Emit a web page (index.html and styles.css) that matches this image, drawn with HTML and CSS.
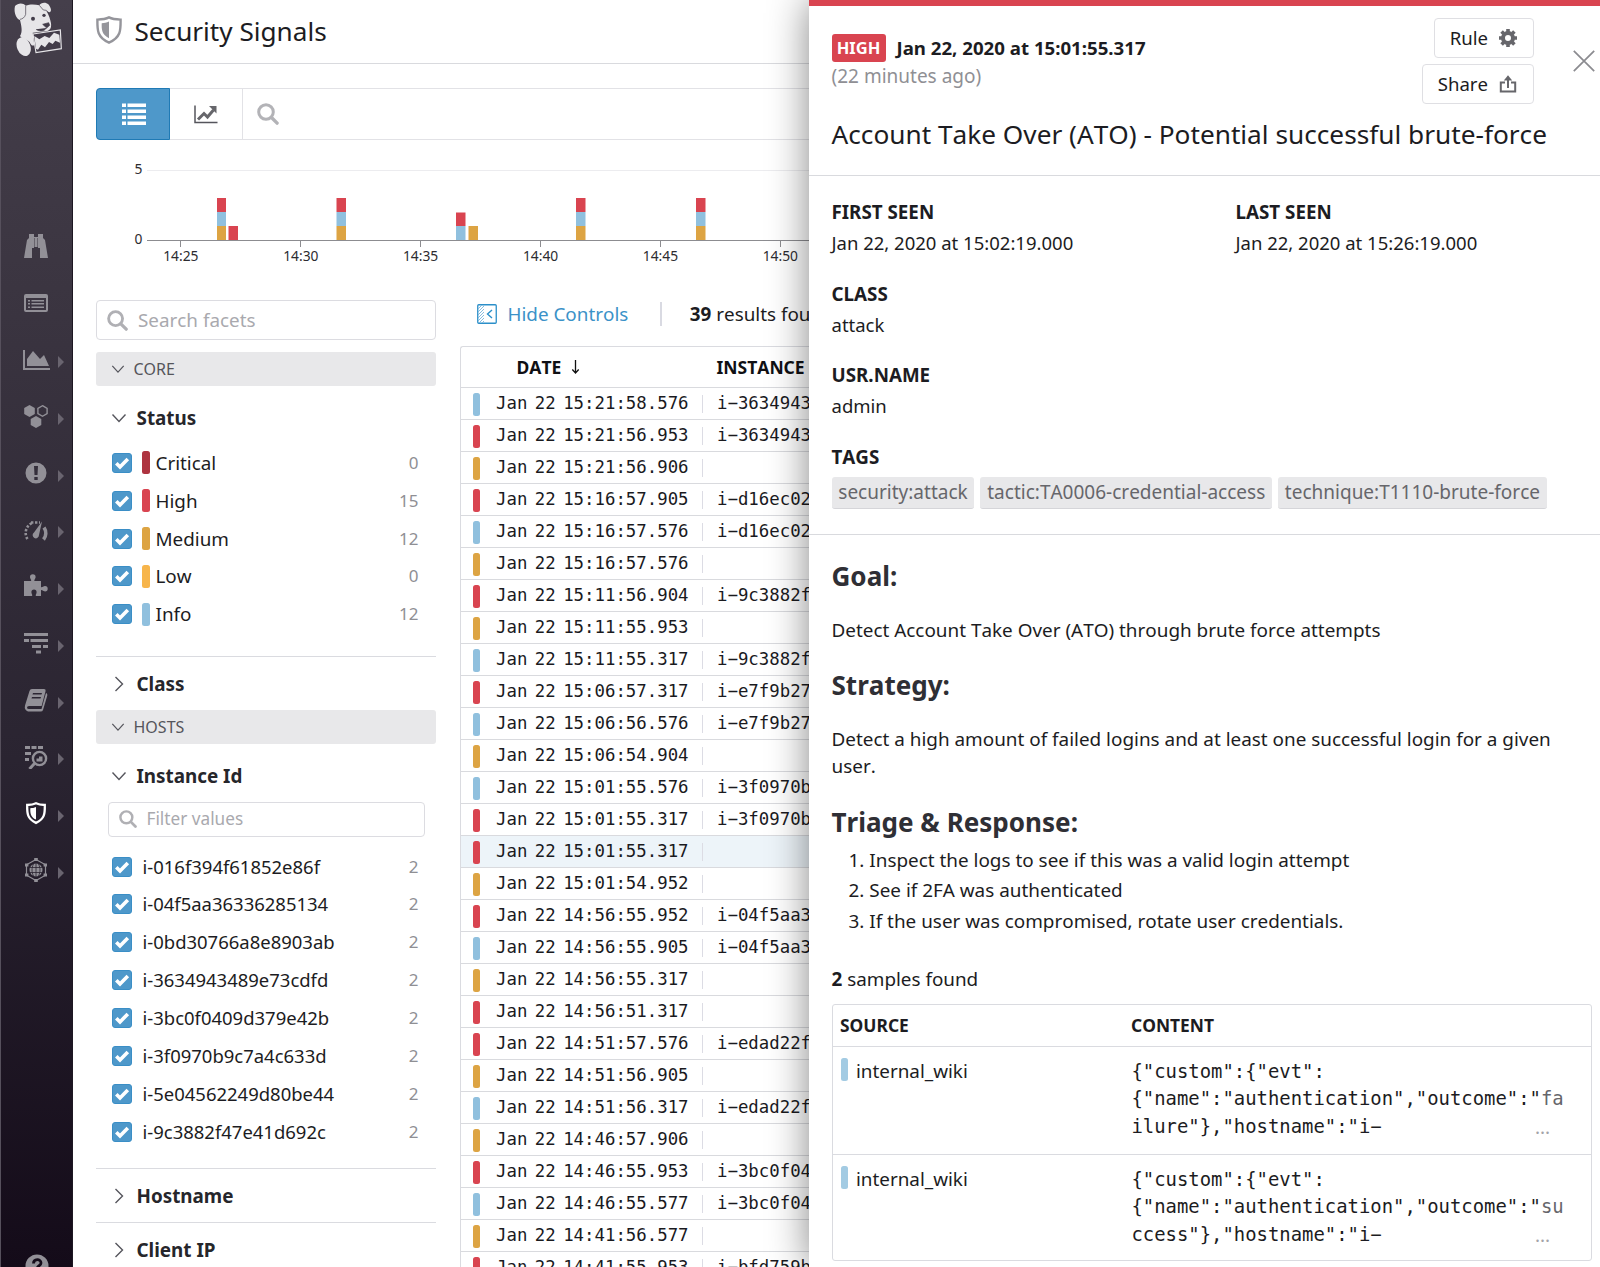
FILE: index.html
```html
<!DOCTYPE html>
<html lang="en">
<head>
<meta charset="utf-8">
<title>Security Signals</title>
<link rel="stylesheet" href="styles.css">
</head>
<body>
<svg class="defs" aria-hidden="true">
  <symbol id="search" viewBox="0 0 22 22"><circle cx="9" cy="9" r="7.3" fill="none" stroke="currentColor" stroke-width="3"/><path d="M14.5 14.5l5.6 5.6" stroke="currentColor" stroke-width="3.4" stroke-linecap="round"/></symbol>
  <symbol id="shield" viewBox="0 0 26 28"><path d="M13 1.4C9.500 3.200 5.500 3.500 1.400 3.600C1.300 14 1 21.500 13 26.600C25 21.500 24.700 14 24.600 3.600C20.500 3.500 16.500 3.200 13 1.400Z" fill="none" stroke="currentColor" stroke-width="2.400"/><path d="M13 5.600C10.500 6.800 8.500 7 5.700 7.200C5.500 14 6 18.500 13 22.200Z" fill="currentColor"/></symbol>
  <symbol id="down" viewBox="0 0 16 16"><path d="M1.500 4.500l6.500 7l6.500-7" fill="none" stroke="#55555c" stroke-width="1.400"/></symbol>
  <symbol id="right" viewBox="0 0 16 16"><path d="M4.500 1l7 7l-7 7" fill="none" stroke="#55555c" stroke-width="1.400"/></symbol>
  <symbol id="check" viewBox="0 0 20 20"><rect x=".5" y=".5" width="19" height="19" rx="2.500" fill="#4e98ca" stroke="#3a8ec6"/><path d="M4.300 10.200l3.700 3.700l7.800-8" fill="none" stroke="#fff" stroke-width="3.600"/></symbol>
</svg>
<div class="app">
  <nav class="nav">
    <svg class="logo" viewBox="36 0 156 174"><path fill="#e6e5e8" d="M45 18C54 8 70 8 77 17C90 12 106 13 118 16C122 7 138 5 145 13C153 23 156 34 149 37C144 37 141 31 138 31C147 45 151 58 153 70C155 86 149 92 138 94L98 98L103 136C95 138 93 134 90 128C82 116 66 118 60 108C68 96 65 80 60 60C50 58 40 38 45 18Z"/><ellipse cx="71" cy="140" rx="20" ry="29" transform="rotate(-22 71 140)" fill="#e6e5e8"/><path d="M99 102L181 90L184 146L108 158Z" fill="#423c49" stroke="#e6e5e8" stroke-width="3.500"/><path d="M103 108L118 118L134 108L148 114L162 98L178 104L180 128L166 122L158 132L147 126L135 142L124 134L114 149L108 146Z" fill="#e6e5e8"/><circle cx="99" cy="56" r="6" fill="#423c49"/><circle cx="132" cy="46" r="5" fill="#423c49"/><path d="M128 73l18-5l3 8l-9 8zM108 88c12 9 26 5 31-4" fill="#423c49" stroke="#423c49" stroke-width="2"/><path d="M77 18v25c-3 10-10 14-17 15M118 16l12 14 9 1" fill="none" stroke="#423c49" stroke-width="2"/></svg>
    <ul class="menu">
      <li><svg viewBox="0 0 24 24"><path d="M5 0h5v3h4V0h5v4l2 2 3 18h-8V14h-2V4h-4v10H8v10H0L3 6l2-2z"/><path d="M10.500 4h3v9h-3z"/></svg></li>
      <li><svg viewBox="0 0 24 24"><path fill-rule="evenodd" d="M2 3h20q2 0 2 2v14q0 2-2 2H2q-2 0-2-2V5q0-2 2-2zM2 7v12h20V7zM4 9h2v1.500H4zm3.500 0H20v1.500H7.500zM4 12h2v1.500H4zm3.500 0H20v1.500H7.500zM4 15.500h2V17H4zm3.500 0H20V17H7.500z"/></svg></li>
      <li class="sub"><svg class="wide" viewBox="0 0 27 24"><path d="M0 2h2v18h25v2H0zM4 18v-7l6-8 7 8 4-4 5 11z"/></svg></li>
      <li class="sub"><svg viewBox="0 0 24 24"><path d="M5.500 1l5.300 3v6l-5.300 3-5.300-3V4zM12 12l5.300 3v6L12 24l-5.300-3v-6z"/><path d="M18.500 1.700l4.600 2.700v5.200l-4.600 2.700-4.600-2.700V4.400z" fill="none" stroke="#929097" stroke-width="1.400"/></svg></li>
      <li class="sub"><svg viewBox="0 0 24 24"><path fill-rule="evenodd" d="M12 1.500a10.500 10.500 0 1 0 0 21a10.500 10.500 0 1 0 0-21zM10 5h4l-.500 9h-3zM10.300 16h3.400v3h-3.400z"/></svg></li>
      <li class="sub"><svg viewBox="0 0 24 24"><path d="M3.500 21A11 11 0 0 1 8 5M7 4.500h9" fill="none" stroke="#929097" stroke-width="2.600" stroke-dasharray="2.400 1.600"/><path d="M18 3.500L10 14.500a3.200 3.200 0 1 0 5 2.500z"/><path d="M20 9.500a10 10 0 0 1-.500 12" fill="none" stroke="#929097" stroke-width="3.600"/></svg></li>
      <li class="sub"><svg viewBox="0 0 24 24"><path d="M0 7h7c1-1-1-2-1-4a2.800 2.800 0 0 1 5.600 0c0 2-2 3-1 4H17v6c1 1 2-1 4-1a2.600 2.600 0 0 1 0 5.400c-2 0-3-2-4-1V22h-5c-1-1 .600-2 .600-3.800a2.600 2.600 0 0 0-5.200 0C7.400 20 9 21 8 22H0z"/></svg></li>
      <li class="sub"><svg viewBox="0 0 24 24"><path d="M0 2h24v3H0zM0 8h5v3H0zm6.500 0H24v3H6.500zM8 14h9v3H8zm11 0h5v3h-5zM12 19.500h5v3h-5z"/></svg></li>
      <li class="sub"><svg viewBox="0 0 24 24"><path fill-rule="evenodd" d="M8 1h12q2 0 1.600 2l-4 15H5q-2 0-2 1.500T5 21h12.500l4.500-16q2 1 1 3.500L19 22q-.400 1.500-2.500 1.500H4Q0 22 1 17.500L5.500 3Q6 1 8 1zM9 5l-.500 1.500h9L18 5zM8 9l-.500 1.500h9L17 9z"/></svg></li>
      <li class="sub"><svg viewBox="0 0 24 24"><path d="M1 1h5v3H1zm6.500 0h5v3h-5zm6.500 0h5v3h-5zM1 7h6v3H1zm0 6h4v3H1zM12.500 16.500v-3h2.500v-2h3.500v5z"/><circle cx="15.500" cy="13.500" r="6.600" fill="none" stroke="#929097" stroke-width="2.400"/><path d="M10.500 18.500L5.500 24" stroke="#929097" stroke-width="3"/></svg></li>
      <li class="sub active"><svg viewBox="0 0 24 24"><path d="M12 2.300C9.300 3.700 6 4 3.200 4C3 12.500 3.300 18 12 21.900C20.700 18 21 12.500 20.800 4C18 4 14.700 3.700 12 2.300Z" fill="none" stroke="#fff" stroke-width="2.300"/><path d="M12 6C10 6.900 8.500 7.100 6.300 7.200C6.200 12.500 6.700 16 12 18.600Z"/></svg></li>
      <li class="sub"><svg viewBox="0 0 24 24"><circle cx="12" cy="12" r="6.500"/><path d="M12 1.500l9.500 5.300v10.400L12 22.500l-9.500-5.300V6.800z" fill="none" stroke="#929097" stroke-width="1.200"/><path d="M12 5v14M5.500 9.500h13M5.500 14.500h13M9.500 6c-2 4-2 8 0 12M14.500 6c2 4 2 8 0 12" fill="none" stroke="#292330" stroke-width=".8"/><path d="M10.200 0h3.600v3h-3.600zM10.200 21h3.600v3h-3.600zM1 5.500h3.400v3H1zM19.600 5.500H23v3h-3.400zM1 15.500h3.400v3H1zM19.600 15.500H23v3h-3.400z"/></svg></li>
    </ul>
    <svg class="help" viewBox="0 0 24 24"><circle cx="12" cy="12" r="11.500" fill="#929097"/><path d="M8.500 9.500c0-5 7.500-5 7.500-.500 0 3-4 2.500-4 6" fill="none" stroke="#150c1a" stroke-width="2.800"/></svg>
  </nav>
  <main class="main">
    <header class="head"><svg class="head-icon"><use href="#shield"/></svg><h1>Security Signals</h1></header>
    <div class="toolbar">
      <div class="tool on"><svg width="24" height="22" viewBox="0 0 24 22" fill="#fff"><path d="M0 .5h4v3.500H0zm5.500 0H24v3.500H5.500zM0 6.500h4V10H0zm5.500 0H24V10H5.500zM0 12.500h4V16H0zm5.500 0H24V16H5.500zM0 18.500h4V22H0zm5.500 0H24V22H5.500z"/></svg></div>
      <div class="tool"><svg width="24" height="20" viewBox="0 0 24 20"><path d="M1 1.500v17h22.500" fill="none" stroke="#55555c" stroke-width="1.500"/><path d="M4 15.500l6-6 3.500 3.500 6-7" fill="none" stroke="#66666b" stroke-width="3"/><path d="M15 2h7.500v7.500z" fill="#66666b"/></svg></div>
      <div class="query"><svg width="22" height="22"><use href="#search"/></svg></div>
    </div>
    <svg class="chart" width="713" height="130" viewBox="96 145 713 130">
      <path d="M147 170.500h700" stroke="#ececef"/>
      <g fill="#d94450"><path d="M217 198h9v14h-9zM228.500 226h9.500v14h-9.500zM336.500 198h9.500v14h-9.500zM456 212.500h9.500v13.500H456zM576 198h9.500v14H576zM696 198h9.500v14H696z"/></g>
      <g fill="#90c0de"><path d="M217 212h9v14h-9zM336.500 212h9.500v14h-9.500zM456 226h9.500v14H456zM576 212h9.500v14H576zM696 212h9.500v14H696z"/></g>
      <g fill="#dda443"><path d="M217 226h9v14h-9zM336.500 226h9.500v14h-9.500zM468.500 226h9.500v14h-9.500zM576 226h9.500v14H576zM696 226h9.500v14H696z"/></g>
      <path d="M147 240.500h700M180.500 240v7M300.500 240v7M420.500 240v7M540.500 240v7M660.500 240v7M780.500 240v7" stroke="#8c8c90" fill="none"/>
      <g class="axis"><text x="142.500" y="174" text-anchor="end">5</text><text x="142.500" y="244" text-anchor="end">0</text></g>
      <g class="axis" text-anchor="middle"><text x="180.800" y="261.300">14:25</text><text x="300.800" y="261.300">14:30</text><text x="420.600" y="261.300">14:35</text><text x="540.600" y="261.300">14:40</text><text x="660.400" y="261.300">14:45</text><text x="780.300" y="261.300">14:50</text></g>
    </svg>
    <div class="body">
      <aside class="facets">
        <div class="box"><svg width="21" height="21"><use href="#search"/></svg>Search facets</div>
        <div class="group"><svg width="14" height="14"><use href="#down"/></svg>CORE</div>
        <div class="facet f1"><svg width="16" height="16"><use href="#down"/></svg>Status</div>
        <ul class="opts">
          <li><svg><use href="#check"/></svg><i class="pill crit"></i><span>Critical</span><b>0</b></li>
          <li><svg><use href="#check"/></svg><i class="pill high"></i><span>High</span><b>15</b></li>
          <li><svg><use href="#check"/></svg><i class="pill med"></i><span>Medium</span><b>12</b></li>
          <li><svg><use href="#check"/></svg><i class="pill low"></i><span>Low</span><b>0</b></li>
          <li><svg><use href="#check"/></svg><i class="pill info"></i><span>Info</span><b>12</b></li>
        </ul>
        <div class="facet ruled"><svg width="16" height="16"><use href="#right"/></svg>Class</div>
        <div class="group"><svg width="14" height="14"><use href="#down"/></svg>HOSTS</div>
        <div class="facet f1"><svg width="16" height="16"><use href="#down"/></svg>Instance Id</div>
        <div class="box small"><svg width="18" height="18"><use href="#search"/></svg>Filter values</div>
        <ul class="opts ids">
          <li><svg><use href="#check"/></svg><span>i-016f394f61852e86f</span><b>2</b></li>
          <li><svg><use href="#check"/></svg><span>i-04f5aa36336285134</span><b>2</b></li>
          <li><svg><use href="#check"/></svg><span>i-0bd30766a8e8903ab</span><b>2</b></li>
          <li><svg><use href="#check"/></svg><span>i-3634943489e73cdfd</span><b>2</b></li>
          <li><svg><use href="#check"/></svg><span>i-3bc0f0409d379e42b</span><b>2</b></li>
          <li><svg><use href="#check"/></svg><span>i-3f0970b9c7a4c633d</span><b>2</b></li>
          <li><svg><use href="#check"/></svg><span>i-5e04562249d80be44</span><b>2</b></li>
          <li><svg><use href="#check"/></svg><span>i-9c3882f47e41d692c</span><b>2</b></li>
        </ul>
        <div class="facet ruled"><svg width="16" height="16"><use href="#right"/></svg>Hostname</div>
        <div class="facet ruled"><svg width="16" height="16"><use href="#right"/></svg>Client IP</div>
      </aside>
      <section class="results">
        <div class="controls">
          <svg width="20" height="20" viewBox="0 0 20 20"><rect x=".75" y=".75" width="18.500" height="18.500" rx="1" fill="none" stroke="#2b8fc9" stroke-width="1.300"/><path d="M1 5l4-4M1 8l6-6M1 11l6-6M1 14l6-6M1 17l6-6M2 19l5-5M5 19l2-2" stroke="#7ab6dc" stroke-width=".9"/><path d="M15 6l-4.500 4 4.500 4" fill="none" stroke="#2b8fc9" stroke-width="1.400"/></svg>
          <span class="hide">Hide Controls</span><i class="sep"></i><span class="found"><b>39</b> results found</span>
        </div>
        <div class="table">
          <div class="thead"><span class="c1">DATE<svg width="9" height="16" viewBox="0 0 9 16"><path d="M4.500 1v13M1.300 10.500l3.200 3.500 3.200-3.500" fill="none" stroke="#111" stroke-width="1.300"/></svg></span><span>INSTANCE</span></div>
          <div class="row"><i class="pill info"></i><span class="d">Jan 22 15:21:58.576</span><span>i−3634943</span></div>
          <div class="row"><i class="pill high"></i><span class="d">Jan 22 15:21:56.953</span><span>i−3634943</span></div>
          <div class="row"><i class="pill med"></i><span class="d">Jan 22 15:21:56.906</span></div>
          <div class="row"><i class="pill high"></i><span class="d">Jan 22 15:16:57.905</span><span>i−d16ec02</span></div>
          <div class="row"><i class="pill info"></i><span class="d">Jan 22 15:16:57.576</span><span>i−d16ec02</span></div>
          <div class="row"><i class="pill med"></i><span class="d">Jan 22 15:16:57.576</span></div>
          <div class="row"><i class="pill high"></i><span class="d">Jan 22 15:11:56.904</span><span>i−9c3882f</span></div>
          <div class="row"><i class="pill med"></i><span class="d">Jan 22 15:11:55.953</span></div>
          <div class="row"><i class="pill info"></i><span class="d">Jan 22 15:11:55.317</span><span>i−9c3882f</span></div>
          <div class="row"><i class="pill high"></i><span class="d">Jan 22 15:06:57.317</span><span>i−e7f9b27</span></div>
          <div class="row"><i class="pill info"></i><span class="d">Jan 22 15:06:56.576</span><span>i−e7f9b27</span></div>
          <div class="row"><i class="pill med"></i><span class="d">Jan 22 15:06:54.904</span></div>
          <div class="row"><i class="pill info"></i><span class="d">Jan 22 15:01:55.576</span><span>i−3f0970b</span></div>
          <div class="row"><i class="pill high"></i><span class="d">Jan 22 15:01:55.317</span><span>i−3f0970b</span></div>
          <div class="row picked"><i class="pill high"></i><span class="d">Jan 22 15:01:55.317</span></div>
          <div class="row"><i class="pill med"></i><span class="d">Jan 22 15:01:54.952</span></div>
          <div class="row"><i class="pill high"></i><span class="d">Jan 22 14:56:55.952</span><span>i−04f5aa3</span></div>
          <div class="row"><i class="pill info"></i><span class="d">Jan 22 14:56:55.905</span><span>i−04f5aa3</span></div>
          <div class="row"><i class="pill med"></i><span class="d">Jan 22 14:56:55.317</span></div>
          <div class="row"><i class="pill high"></i><span class="d">Jan 22 14:56:51.317</span></div>
          <div class="row"><i class="pill high"></i><span class="d">Jan 22 14:51:57.576</span><span>i−edad22f</span></div>
          <div class="row"><i class="pill med"></i><span class="d">Jan 22 14:51:56.905</span></div>
          <div class="row"><i class="pill info"></i><span class="d">Jan 22 14:51:56.317</span><span>i−edad22f</span></div>
          <div class="row"><i class="pill med"></i><span class="d">Jan 22 14:46:57.906</span></div>
          <div class="row"><i class="pill high"></i><span class="d">Jan 22 14:46:55.953</span><span>i−3bc0f04</span></div>
          <div class="row"><i class="pill info"></i><span class="d">Jan 22 14:46:55.577</span><span>i−3bc0f04</span></div>
          <div class="row"><i class="pill med"></i><span class="d">Jan 22 14:41:56.577</span></div>
          <div class="row"><i class="pill high"></i><span class="d">Jan 22 14:41:55.953</span><span>i−bfd759b</span></div>
        </div>
      </section>
    </div>
  </main>
  <aside class="panel">
    <header class="p-head">
      <div class="p-top">
        <div class="when"><div class="line"><span class="badge">HIGH</span><strong>Jan 22, 2020 at 15:01:55.317</strong></div><div class="ago">(22 minutes ago)</div></div>
        <div class="btns">
          <div class="btn">Rule<svg width="18" height="18" viewBox="-9 -9 18 18"><circle r="5" fill="none" stroke="#66666b" stroke-width="4"/><path d="M0-9v3M0 6v3M-9 0h3M6 0h3M-6.400-6.400l2 2M4.400 4.400l2 2M-6.400 6.400l2-2M4.400-4.400l2-2" stroke="#66666b" stroke-width="3.600"/></svg></div>
          <div class="btn">Share<svg width="18" height="18" viewBox="0 0 18 18"><path d="M6 7.500H1.800v9h14.400v-9H12M9 13V3" fill="none" stroke="#66666b" stroke-width="2"/><path d="M4.800 5.500L9 .3l4.200 5.200z" fill="#66666b"/></svg></div>
        </div>
        <svg class="close" width="22" height="22" viewBox="0 0 22 22"><path d="M.8.8l20.400 20.400M21.200.8L.8 21.200" stroke="#8b8b90" stroke-width="1.700"/></svg>
      </div>
      <h2>Account Take Over (ATO) - Potential successful brute-force</h2>
    </header>
    <section class="meta">
      <div class="pair"><dl><dt>FIRST SEEN</dt><dd>Jan 22, 2020 at 15:02:19.000</dd></dl><dl><dt>LAST SEEN</dt><dd>Jan 22, 2020 at 15:26:19.000</dd></dl></div>
      <dl><dt>CLASS</dt><dd>attack</dd></dl>
      <dl><dt>USR.NAME</dt><dd>admin</dd></dl>
      <dl><dt>TAGS</dt></dl>
      <div class="tags"><span>security:attack</span><span>tactic:TA0006-credential-access</span><span>technique:T1110-brute-force</span></div>
    </section>
    <section class="doc">
      <h3>Goal:</h3>
      <p>Detect Account Take Over (ATO) through brute force attempts</p>
      <h3>Strategy:</h3>
      <p>Detect a high amount of failed logins and at least one successful login for a given user.</p>
      <h3 class="tight">Triage &amp; Response:</h3>
      <ol><li>Inspect the logs to see if this was a valid login attempt</li><li>See if 2FA was authenticated</li><li>If the user was compromised, rotate user credentials.</li></ol>
      <div class="count"><b>2</b> samples found</div>
      <div class="samples">
        <div class="s-head"><span>SOURCE</span><span>CONTENT</span></div>
        <div class="s-row"><i class="pill pale"></i><span class="src">internal_wiki</span><code>{"custom":{"evt":<br>{"name":"authentication","outcome":"<em>fa</em><br>ilure"},"hostname":"i−</code><span class="more">...</span></div>
        <div class="s-row"><i class="pill pale"></i><span class="src">internal_wiki</span><code>{"custom":{"evt":<br>{"name":"authentication","outcome":"<em>su</em><br>ccess"},"hostname":"i−</code><span class="more">...</span></div>
      </div>
    </section>
  </aside>
</div>
</body>
</html>
```
FILE: styles.css
```css
* { box-sizing: border-box; }
body { margin: 0; font: 18.85px/28px "Noto Sans", sans-serif; font-kerning: none; color: #1c1c22; background: #fff; overflow: hidden; }
ul, ol, dl, dd, h1, h2, h3, p { margin: 0; padding: 0; list-style: none; }
svg { flex: none; display: block; }
.defs { position: absolute; width: 0; height: 0; }
.app { position: relative; display: flex; width: 1600px; height: 1267px; overflow: hidden; }

.nav { width: 72.500px; flex: none; display: flex; flex-direction: column; align-items: center; height: 1267px; overflow: hidden; background: linear-gradient(#453f4b, #3a3440 25%, #2a2431 60%, #140b19); border-left: 1px solid #56505c; border-right: 1px solid #1d1722; }
.logo { width: 52px; height: 58px; margin-left: 4px; }
.menu { margin-top: 160px; width: 100%; }
.menu li { position: relative; height: 56.700px; display: flex; align-items: center; padding-left: 23px; fill: #929097; color: #fff; }
.menu svg { width: 24px; height: 24px; }
.menu .wide { width: 27px; margin-left: -1px; }
.sub::after { content: ""; position: absolute; left: 57px; top: 25px; border-left: 6px solid #69646f; border-top: 6px solid transparent; border-bottom: 6px solid transparent; }
.menu .active { fill: #fff; }
.help { width: 24px; height: 24px; margin: 356px 0 0 1px; }

.main { width: 737px; flex: none; overflow: hidden; display: flex; flex-direction: column; }
.head { height: 64px; flex: none; display: flex; align-items: center; gap: 12.500px; padding: 0 0 2px 23.500px; border-bottom: 1px solid #d9dade; }
.head-icon { width: 26px; height: 28px; color: #95959b; margin-top: -1px; }
h1 { font-size: 26.150px; font-weight: 400; line-height: 36px; }
.toolbar { display: flex; height: 52px; flex: none; margin: 24px 0 0 23.500px; border: 1.500px solid #e2e2e6; border-right: 0; border-radius: 4px 0 0 4px; }
.tool { width: 73px; display: flex; align-items: center; justify-content: center; border-right: 1.500px solid #e2e2e6; }
.tool.on { width: 74px; background: #4e98ca; border: 1px solid #1f7ab5; border-radius: 4px 0 0 4px; margin: -1px 0 -1px -1px; padding-left: 1px; }
.query { display: flex; align-items: center; padding-left: 14px; color: #b3b3b7; }
.chart { flex: none; margin: 5px 0 0 23.500px; }
.axis { font: 13.800px "Noto Sans", sans-serif; fill: #2c2c30; }

.body { display: flex; gap: 23.500px; margin: 31px 0 0 23.500px; }
.body, .table { flex: none; }
.facets { width: 340px; flex: none; margin-top: -6px; }
.box { display: flex; align-items: center; height: 40px; gap: 10px; padding-left: 10px; border: 1.500px solid #dcdce1; border-radius: 4px; color: #a9a9ae; }
.box svg { color: #b0b0b4; }
.box.small { height: 35px; margin: 0 11.500px 11px; font-size: 17.200px; }
.group { display: flex; align-items: center; gap: 8.500px; height: 33.500px; margin-top: 12px; padding-left: 15px; background: #e8e8ea; border-radius: 3px; font-size: 16px; color: #55555b; }
.facet { display: flex; align-items: center; gap: 9.500px; height: 54px; padding-left: 15px; font-weight: 700; color: #26262b; }
.facet.f1 { height: 49px; margin: 7.500px 0 2px; }
.facet.f1 + .box { margin-top: -.5px; }
.ruled { border-top: 1.500px solid #dadbe0; }
.ruled + .group { margin-top: 0; }
.opts { padding-bottom: 23px; }
.opts li { display: flex; align-items: center; height: 37.850px; padding: 0 17.500px 0 16px; }
.opts svg { width: 20px; height: 20px; }
.opts b { margin-left: auto; font-weight: 400; font-size: 17px; color: #8f8f94; }
.opts .pill { margin: 0 6px 0 10px; }
.opts.ids { padding-bottom: 18px; }
.ids span { margin-left: 10.500px; font-size: 18.480px; }
.pill { width: 7.500px; height: 23px; border-radius: 2.500px; flex: none; }
.crit { background: #ae3440; } .high { background: #d94450; } .med { background: #dda443; } .low { background: #f7b54b; } .info { background: #90c0de; } .pale { background: #a3cbe3; }

.results { width: 420px; flex: none; }
.controls { display: flex; align-items: center; height: 28px; padding-left: 17px; white-space: nowrap; margin-top: -6px; }
.hide { margin-left: 11px; color: #3b92c8; }
.sep { width: 1.500px; height: 24px; background: #d9dae2; margin: 0 28px 0 32px; }
.table { margin-top: 18px; border: 1.500px solid #dadbe0; border-right: 0; border-radius: 3px 0 0 0; }
.thead { display: flex; height: 41px; align-items: center; border-bottom: 1px solid #d9dade; font-size: 17.500px; font-weight: 700; color: #101014; white-space: nowrap; }
.c1 { display: flex; align-items: center; gap: 9.500px; width: 256px; padding-left: 56px; }
.row { display: flex; align-items: center; height: 32px; padding: 0 0 0 12px; border-bottom: 1px solid #d9dade; font: 17.380px/32px "DejaVu Sans Mono", monospace; word-spacing: -3px; white-space: nowrap; color: #1a1a1e; }
.row .pill { margin-top: 1px; }
.row .d { margin-left: 16px; width: 207px; height: 18px; line-height: 16px; border-right: 1.500px solid #dcdce4; }
.row .d + span { margin-left: 14px; line-height: 28px; padding-bottom: 2px; }
.picked { background: #edf4f9; }

.panel { position: absolute; left: 809px; top: 0; width: 791px; height: 1267px; background: #fff; border-top: 6px solid #d94450; box-shadow: 0 0 38px rgba(0, 0, 0, .48); }
.p-head { height: 169.500px; padding: 12px 0 0 22.500px; border-bottom: 1.500px solid #d9dade; }
.p-top { display: flex; height: 88px; }
.when { flex: 1; padding-top: 16px; }
.line { display: flex; align-items: center; gap: 11px; height: 28px; }
.badge { background: #d94450; color: #fff; font-weight: 700; font-size: 16.500px; width: 54px; height: 28.500px; line-height: 28px; text-align: center; border-radius: 3px; }
.line strong { font-size: 18.650px; }
.ago { color: #8f8f94; line-height: 28.500px; font-size: 19px; }
.btns { display: flex; flex-direction: column; align-items: flex-end; gap: 6px; }
.btn { display: flex; align-items: center; gap: 11px; height: 40px; padding: 0 16px 0 15px; border: 1.500px solid #dfdfe3; border-radius: 4px; font-size: 18.600px; }
.close { margin: 32px 5px 0 39px; }
h2 { font-size: 26.230px; font-weight: 400; line-height: 36px; margin-top: 10px; white-space: nowrap; }
.meta { height: 359px; padding: 21.500px 0 0 22.500px; border-bottom: 1.500px solid #d9dade; }
.pair { display: flex; } .pair dl { width: 404px; flex: none; }
dl { margin-bottom: 21.500px; }
dt { font-weight: 700; line-height: 30px; font-size: 18.800px; } dd { line-height: 31px; margin-bottom: -1px; font-size: 18.500px; }
.meta dl + .tags { margin-top: -16.500px; }
.tags { display: flex; gap: 6px; font-size: 19px; }
.tags span { background: #e8e8ea; border-bottom: 1.500px solid #d5d5d9; border-radius: 3px; height: 32px; line-height: 30px; padding: 0 6.800px; color: #66666b; white-space: nowrap; }
.doc { padding: 23.500px 8px 0 22.500px; }
h3 { font-size: 26.050px; line-height: 36px; color: #2f2f35; margin-bottom: 22.500px; }
.doc p { line-height: 27.500px; margin-bottom: 23px; padding-right: 20px; font-size: 18.900px; }
h3.tight { margin: 0 0 5px; }
ol li { counter-increment: n; line-height: 30.500px; padding-left: 17px; font-size: 18.900px; }
ol li::before { content: counter(n) ". "; }
.count { margin: 29px 0 10.500px; }
.samples { border: 1.500px solid #dadbe0; border-radius: 3px; height: 257px; }
.s-head { display: flex; height: 42px; align-items: center; padding-left: 7.500px; border-bottom: 1.500px solid #dadbe0; font-weight: 700; font-size: 17.400px; }
.s-head span:first-child { width: 291px; }
.s-row { display: flex; height: 107.500px; padding: 11px 0 0 8px; }
.s-row + .s-row { border-top: 1.500px solid #dadbe0; padding-top: 10.500px; }
.src { margin-left: 8px; width: 275.500px; line-height: 26px; }
code { font: 18.900px/27.500px "DejaVu Sans Mono", monospace; white-space: nowrap; width: 403.500px; }
em { font-style: normal; color: #66666b; }
.more { color: #a3a3a8; line-height: 18px; margin-top: 60px; }
```
